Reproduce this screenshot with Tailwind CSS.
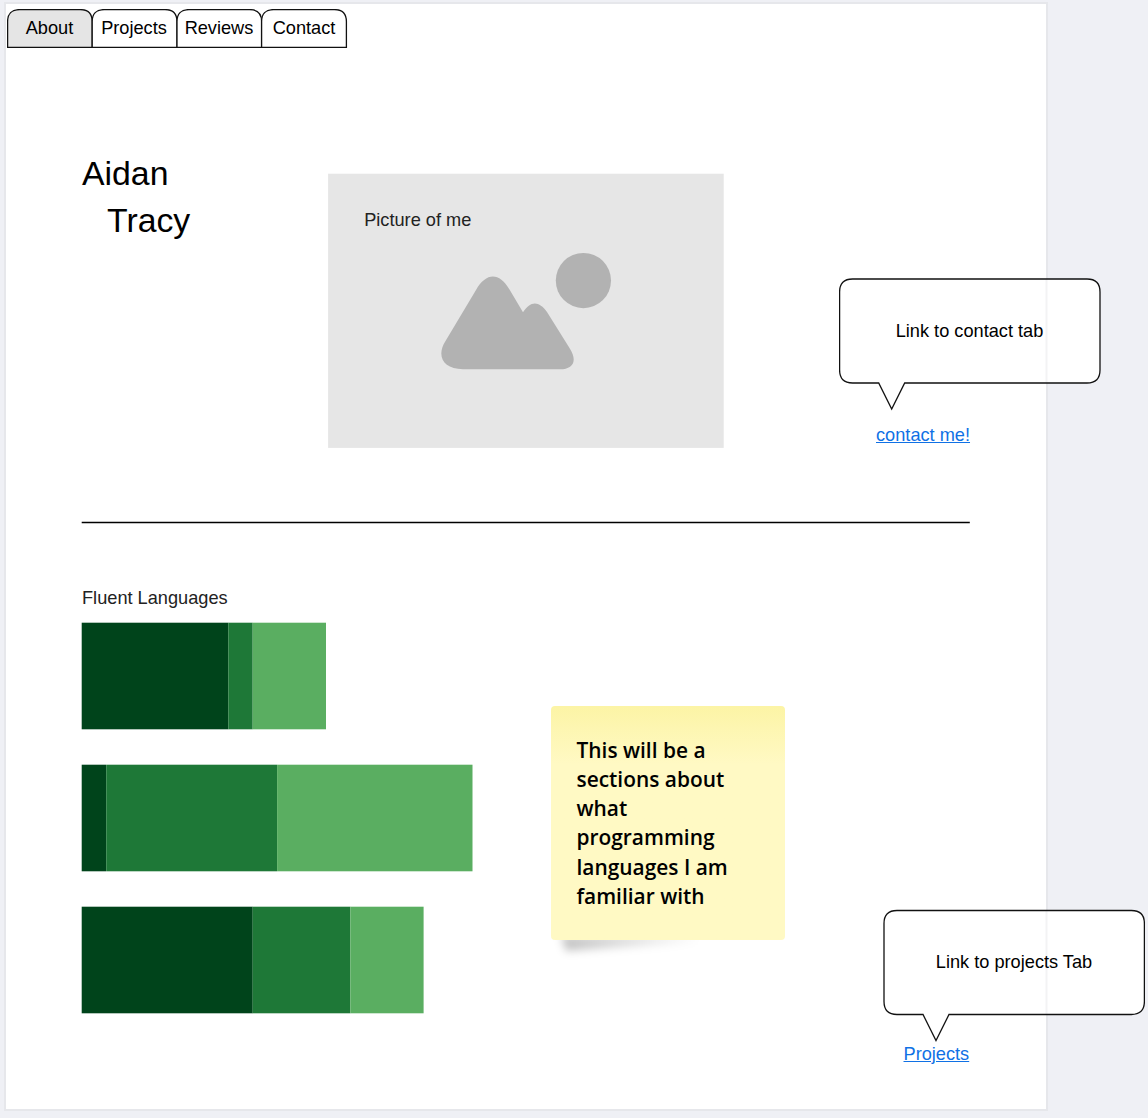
<!DOCTYPE html>
<html lang="en">
<head>
<meta charset="utf-8">
<title>Aidan Tracy</title>
<script src="https://cdn.jsdelivr.net/npm/@tailwindcss/browser@4"></script>
</head>
<body class="relative h-[1118px] w-[1148px] overflow-hidden bg-[#eff0f5] pt-[2px] pl-[4px] font-['Liberation_Sans',Arial,sans-serif] text-[18.2px] leading-[22px] text-black">
<main class="flex h-[1109px] w-[1043.5px] flex-col border-2 border-[#e6e7eb] bg-white">
  <!-- Tabs -->
  <nav class="relative ml-px mt-[5px] flex h-[39px] w-[341px]">
    <svg class="absolute inset-0 h-full w-full" viewBox="0 0 341 39" fill="white" stroke="#111" stroke-width="1.3">
      <path fill="#e5e5e5" d="M.6 38.4V12.6Q.6.6 12.6.6H73.2Q85.2.6 85.2 12.6V38.4Z"/>
      <path d="M85.2 38.4V12.6Q85.2.6 97.2.6H158Q170 .6 170 12.6V38.4Z"/>
      <path d="M170 38.4V12.6Q170 .6 182 .6H242.6Q254.6.6 254.6 12.6V38.4Z"/>
      <path d="M254.6 38.4V12.6Q254.6.6 266.6.6H327.4Q339.4.6 339.4 12.6V38.4Z"/>
    </svg>
    <a class="relative w-[85px] pt-[8px] text-center">About</a>
    <a class="relative w-[84px] pt-[8px] text-center">Projects</a>
    <a class="relative w-[86px] pt-[8px] text-center">Reviews</a>
    <a class="relative w-[84px] pt-[8px] text-center">Contact</a>
  </nav>

  <!-- Intro -->
  <header class="ml-[76px] mt-[102px] flex h-[371px]">
    <h1 class="w-[246px] shrink-0 text-[33.8px] leading-[47px]">Aidan<br><span class="pl-[25px]">Tracy</span></h1>
    <figure class="relative mt-[23px] h-[275px] w-[396px] shrink-0">
      <svg class="absolute inset-0" width="396" height="275" viewBox="0 0 396 275">
        <rect x=".1" y=".7" width="395.6" height="274.2" fill="#e6e6e6"/>
        <g fill="#b2b2b2">
          <circle cx="255.4" cy="107.6" r="27.6"/>
          <path d="M135 196.2C115 196.2 108 183 117.500 168L148 117C158 99.500 171 98.700 181.500 116.500L195 139.200C202.500 127.500 211 127.500 219 139L241.500 175C250 188 245 196.200 232 196.200Z"/>
        </g>
      </svg>
      <figcaption class="relative pl-[36.2px] pt-[36px] text-[#222]">Picture of me</figcaption>
    </figure>
    <a class="mt-[274px] ml-[152px] whitespace-nowrap text-[#1071e5] underline">contact me!</a>
  </header>
  <svg class="ml-[75px] h-[3px] w-[889px] shrink-0" viewBox="0 0 889 3"><path d="M.7 1.5H888.800" stroke="#000" stroke-width="1.3"/></svg>

  <!-- Languages -->
  <section class="mt-[63px] ml-[75px]">
    <h2 class="pl-px text-[#222]">Fluent Languages</h2>
    <svg class="mt-[13px]" width="393" height="393" viewBox="0 0 393 393">
      <g fill="#00441b">
        <rect x=".7" y=".7" width="146.600" height="106.600"/>
        <rect x=".7" y="142.700" width="24.400" height="106.600"/>
        <rect x=".7" y="284.700" width="171" height="106.600"/>
      </g>
      <g fill="#1e7837">
        <rect x="147.300" y=".7" width="24.400" height="106.600"/>
        <rect x="25.200" y="142.700" width="170.900" height="106.600"/>
        <rect x="171.600" y="284.700" width="97.700" height="106.600"/>
      </g>
      <g fill="#5aae61">
        <rect x="171.700" y=".7" width="73.300" height="106.600"/>
        <rect x="196.100" y="142.700" width="195.400" height="106.600"/>
        <rect x="269.300" y="284.700" width="73.300" height="106.600"/>
      </g>
    </svg>
  </section>
  <a class="mt-[28px] ml-[897.5px] w-max text-[#1071e5] underline">Projects</a>
</main>

<!-- Sticky note -->
<aside class="absolute left-[551px] top-[706px] h-[234px] w-[234px]">
  <svg class="absolute left-0 top-[224px]" width="234" height="40" viewBox="0 0 234 40">
    <defs>
      <filter id="soft" x="-20%" y="-60%" width="140%" height="220%"><feGaussianBlur stdDeviation="4"/></filter>
      <linearGradient id="fade"><stop stop-opacity=".24"/><stop offset="1" stop-opacity="0"/></linearGradient>
    </defs>
    <path filter="url(#soft)" fill="url(#fade)" d="M10 6H150V12L15 21Z"/>
  </svg>
  <p class="relative h-full rounded-[4px] bg-linear-to-b from-[#fcf4a5] to-[#fff9c4] to-25% pl-[25.5px] pt-[29.7px] font-['Open_Sans','Noto_Sans',sans-serif] text-[20.9px] leading-[29.2px] font-semibold">This will be a<br>sections about<br>what<br>programming<br>languages I am<br>familiar with</p>
</aside>

<!-- Callouts -->
<div class="absolute left-[839px] top-[278px] h-[133px] w-[262px]">
  <svg class="absolute inset-0" width="262" height="133" viewBox="0 0 262 133">
    <path d="M13.600 1H248Q261 1 261 14V92Q261 105 248 105H65.700L52.700 131 39.700 105H13.600Q.6 105 .6 92V14Q.6 1 13.600 1Z" fill="#fff"/>
    <path d="M207.500 1V105" stroke="#f3f3f4" stroke-width="2"/>
    <path d="M13.600 1H248Q261 1 261 14V92Q261 105 248 105H65.700L52.700 131 39.700 105H13.600Q.6 105 .6 92V14Q.6 1 13.600 1Z" fill="none" stroke="#111" stroke-width="1.300"/>
  </svg>
  <p class="relative pt-[42px] pr-px text-center">Link to contact tab</p>
</div>
<div class="absolute left-[883px] top-[909px] h-[133px] w-[262px]">
  <svg class="absolute inset-0" width="262" height="133" viewBox="0 0 262 133">
    <path d="M14 1.500H248.400Q261.400 1.500 261.400 14.500V92.500Q261.400 105.500 248.400 105.500H66L53 131.500 40 105.500H14Q1 105.500 1 92.500V14.500Q1 1.500 14 1.500Z" fill="#fff"/>
    <path d="M163.500 1V105" stroke="#f3f3f4" stroke-width="2"/>
    <path d="M14 1.500H248.400Q261.400 1.500 261.400 14.500V92.500Q261.400 105.500 248.400 105.500H66L53 131.500 40 105.500H14Q1 105.500 1 92.500V14.500Q1 1.500 14 1.500Z" fill="none" stroke="#111" stroke-width="1.300"/>
  </svg>
  <p class="relative pt-[42px] text-center">Link to projects Tab</p>
</div>
</body>
</html>
